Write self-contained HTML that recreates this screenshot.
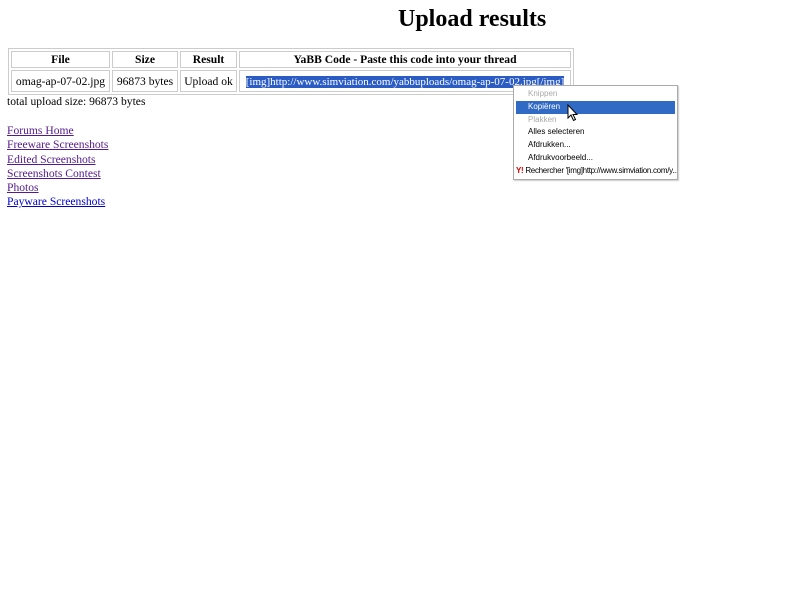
<!DOCTYPE html>
<html><head><meta charset="utf-8"><style>
body{margin:0;width:800px;height:600px;background:#fff;font-family:"Liberation Serif",serif;font-size:11.6px;color:#000;position:relative;overflow:hidden}
h1{position:absolute;left:398px;top:6px;margin:0;font-size:24px;font-weight:bold}
table{position:absolute;left:8px;top:48px;width:566px;border:1px solid #ccc;border-collapse:separate;border-spacing:2px;table-layout:fixed}
td,th{border:1px solid #ccc;padding:0;font-size:11.6px;white-space:nowrap;overflow:hidden;text-align:center}
th{height:15px}
td{height:20px}
.sel{background:#2a5cc4;color:#fff;font-size:11px}
.tot{position:absolute;left:7px;top:95px}
.links{position:absolute;left:7px;top:124px;line-height:14.3px}
.links a{display:block;color:#551a8b;text-decoration:underline}
.links a.b{color:#00c}
.menu{position:absolute;left:513px;top:85px;width:163px;height:93px;background:#fff;border:1px solid #aaa;font-family:"Liberation Sans",sans-serif;font-size:8px;box-shadow:1px 1px 1px #ccc;overflow:hidden}
.menu div{height:12.8px;line-height:12.8px;padding-left:14px;white-space:nowrap}
.g{color:#aaa}
.h{background:#316ac5;color:#fff;margin:0 2px;padding-left:12px!important}
</style></head><body>
<h1>Upload results</h1>
<table>
<colgroup><col style="width:99px"><col style="width:66px"><col style="width:57px"><col></colgroup>
<tr><th>File</th><th>Size</th><th>Result</th><th>YaBB Code - Paste this code into your thread</th></tr>
<tr><td>omag-ap-07-02.jpg</td><td>96873 bytes</td><td>Upload ok</td><td><span class="sel">[img]http://www.simviation.com/yabbuploads/omag-ap-07-02.jpg[/img]</span></td></tr>
</table>
<div class="tot">total upload size: 96873 bytes</div>
<div class="links">
<a>Forums Home</a><a>Freeware Screenshots</a><a>Edited Screenshots</a><a>Screenshots Contest</a><a>Photos</a><a class="b">Payware Screenshots</a>
</div>
<div class="menu">
<div class="g" style="margin-top:2px">Knippen</div>
<div class="h">Kopiëren</div>
<div class="g">Plakken</div>
<div>Alles selecteren</div>
<div>Afdrukken...</div>
<div>Afdrukvoorbeeld...</div>
<div style="padding-left:2px;letter-spacing:-0.3px"><span style="color:#d00;font-weight:bold">Y!</span> Rechercher '[img]http://www.simviation.com/y...'</div>
</div>
<svg style="position:absolute;left:567px;top:104px" width="12" height="18" viewBox="0 0 12 18"><path d="M1 1 L1 14 L4 11 L6.5 16.5 L8.5 15.5 L6 10.5 L10 10.5 Z" fill="#fff" stroke="#000" stroke-width="1"/></svg>
</body></html>
